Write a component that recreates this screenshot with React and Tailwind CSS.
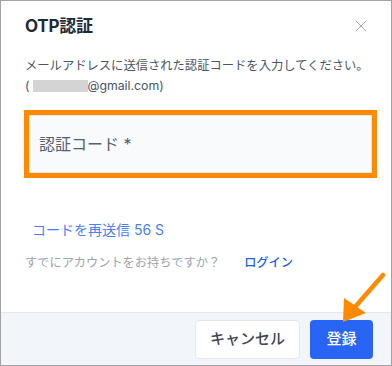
import { X } from "lucide-react";

const font = { fontFamily: '"Inter", "Noto Sans CJK JP", sans-serif' };

export default function App() {
  return (
    <div
      className="relative w-[392px] h-[366px] border border-[#a3a3a3] bg-white flex flex-col overflow-hidden"
      style={font}
    >
      <div className="flex-1 flex flex-col">
        {/* header */}
        <div className="flex items-center justify-between pl-6 pr-[20px] pt-[12px]">
          <h2 className="text-[17px] leading-[26px] font-bold text-[#1f2937] tracking-[-0.2px]">OTP認証</h2>
          <X className="w-[20px] h-[20px] text-[#9ca3af]" strokeWidth={1.1} />
        </div>

        {/* description */}
        <div className="px-6 mt-[17px] text-[12.3px] leading-[20px] text-[#4b5563]">
          <p className="whitespace-nowrap">メールアドレスに送信された認証コードを入力してください。</p>
          <p className="flex items-center">
            (
            <span className="inline-block w-[55px] h-[12px] bg-[#d4d4d4] ml-[3px]" />
            @gmail.com)
          </p>
        </div>

        {/* code input */}
        <div className="ml-[23px] mt-[14px] w-[353px] h-[68px] border-[5px] border-[#ff8a00]">
          <div className="h-full bg-[#f8fafc] border border-[#e2e8f0] flex items-center pl-[9px]">
            <span className="text-[16px] font-normal text-[#56606e]">認証コード *</span>
          </div>
        </div>

        {/* resend */}
        <div className="pl-[31px] mt-[42px] text-[14px] leading-[20px] text-[#4a80f5]">
          コードを再送信 56 S
        </div>

        <div className="pl-6 mt-[13px] flex items-center text-[12.2px] leading-[20px]">
          <span className="text-[#9ca3af]">すでにアカウントをお持ちですか？</span>
          <span className="ml-[24px] font-medium text-[#1d5ff0]">ログイン</span>
        </div>
      </div>

      {/* footer */}
      <div className="h-[53px] border-t border-[#e5e7eb] bg-[#f2f6fa] flex items-center justify-end gap-[10px] pr-[18px]">
        <button className="w-[105px] h-[39px] rounded-[4px] bg-white border border-[#e5e7eb] text-[15px] font-medium text-[#3f4654]">
          キャンセル
        </button>
        <button className="w-[63px] h-[39px] rounded-[4px] bg-[#2865f5] text-[15px] font-medium text-white">
          登録
        </button>
      </div>

      {/* annotation arrow */}
      <svg className="absolute left-[330px] top-[268px] w-[62px] h-[60px]" viewBox="0 0 62 60">
        <line x1="52" y1="6" x2="24" y2="38" stroke="#ff8a00" strokeWidth="4.5" strokeLinecap="round" />
        <polygon points="12,53 13,29 35,44" fill="#ff8a00" />
      </svg>
    </div>
  );
}
